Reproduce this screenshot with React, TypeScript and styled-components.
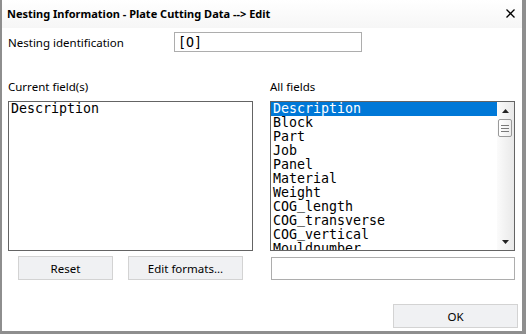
import React from "react";
import styled, { createGlobalStyle } from "styled-components";

const fields = [
  "Description",
  "Block",
  "Part",
  "Job",
  "Panel",
  "Material",
  "Weight",
  "COG_length",
  "COG_transverse",
  "COG_vertical",
  "Mouldnumber",
];

// the mono font puts "_" very low, lift it so it stays with its own row
function fieldLabel(name: string) {
  const parts = name.split("_");
  return parts.map((part, i) => (
    <React.Fragment key={i}>
      {i > 0 && <Underscore>_</Underscore>}
      {part}
    </React.Fragment>
  ));
}

function App() {
  return (
    <>
      <GlobalStyle />
      <Window>
        <TitleBar>
          <Title>Nesting Information - Plate Cutting Data --&gt; Edit</Title>
          <CloseIcon width="9" height="9" viewBox="0 0 9 9">
            <path d="M0.5 0.5 L8.5 8.5 M8.5 0.5 L0.5 8.5" stroke="#000" strokeWidth="1.3" />
          </CloseIcon>
        </TitleBar>
        <Body>
          <IdRow>
            <IdLabel>Nesting identification</IdLabel>
            <TextInput width={188} height={20} defaultValue="[O]" />
          </IdRow>
          <Columns>
            <Column>
              <ColLabel>Current field(s)</ColLabel>
              <ListBox>
                <Items>
                  <Row>Description</Row>
                </Items>
              </ListBox>
              <ButtonRow>
                <Button width={95}>Reset</Button>
                <Button width={115}>Edit formats...</Button>
              </ButtonRow>
            </Column>
            <Column>
              <ColLabel>All fields</ColLabel>
              <ListBox>
                <Items>
                  {fields.map((f, i) => (
                    <Row key={f} selected={i === 0}>
                      {fieldLabel(f)}
                    </Row>
                  ))}
                </Items>
                <ScrollBar>
                  <ArrowBox>
                    <svg width="7" height="4" viewBox="0 0 7 4">
                      <path d="M3.5 0 L7 4 L0 4 Z" fill="#222" />
                    </svg>
                  </ArrowBox>
                  <Thumb>
                    <Grip />
                    <Grip />
                    <Grip />
                  </Thumb>
                  <Track />
                  <ArrowBox>
                    <svg width="7" height="4" viewBox="0 0 7 4">
                      <path d="M0 0 L7 0 L3.5 4 Z" fill="#222" />
                    </svg>
                  </ArrowBox>
                </ScrollBar>
              </ListBox>
              <FilterInput />
            </Column>
          </Columns>
          <Footer>
            <Button width={125}>OK</Button>
          </Footer>
        </Body>
      </Window>
    </>
  );
}

export default App;

const GlobalStyle = createGlobalStyle`
  body {
    margin: 0;
    background: #fff;
  }
  * {
    box-sizing: border-box;
  }
`;

const Window = styled.div`
  width: 526px;
  height: 334px;
  background: #fff;
  border-left: 2px solid #8e8e8e;
  border-right: 4px solid #8e8e8e;
  border-bottom: 3px solid #8e8e8e;
  display: flex;
  flex-direction: column;
  font-family: "Noto Sans", "Open Sans", sans-serif;
  font-size: 11px;
  color: #000;
`;

const TitleBar = styled.div`
  height: 28px;
  display: flex;
  align-items: center;
  justify-content: space-between;
  padding: 0 7px 2px 5px;
  background: linear-gradient(#ffffff, #f6f6f6);
`;

const Title = styled.div`
  font-weight: bold;
  font-size: 11px;
`;

const CloseIcon = styled.svg`
  display: block;
  margin-top: 1px;
`;

const Body = styled.div`
  flex: 1;
  display: flex;
  flex-direction: column;
  padding: 4px 4px 0 6px;
`;

const IdRow = styled.div`
  display: flex;
  align-items: center;
  height: 20px;
`;

const IdLabel = styled.div`
  width: 166px;
  font-size: 11.5px;
`;

const TextInput = styled.input<{ width: number; height: number }>`
  width: ${(p) => p.width}px;
  height: ${(p) => p.height}px;
  border: 1px solid #adadad;
  padding: 0 0 0 3px;
  font-family: "DejaVu Sans Mono", monospace;
  font-size: 13.3px;
  outline: none;
  background: #fff;
  color: #000;
`;

const Columns = styled.div`
  display: grid;
  grid-template-columns: 245px 245px;
  column-gap: 17px;
  margin-top: 27px;
`;

const Column = styled.div`
  display: flex;
  flex-direction: column;
`;

const ColLabel = styled.div`
  height: 15px;
  line-height: 15px;
  font-size: 11.5px;
`;

const ListBox = styled.div`
  margin-top: 7px;
  height: 150px;
  border: 1px solid #646464;
  display: flex;
  background: #fff;
`;

const Items = styled.div`
  flex: 1;
  overflow: hidden;
  font-family: "DejaVu Sans Mono", monospace;
  font-size: 13.3px;
`;

const Row = styled.div<{ selected?: boolean }>`
  height: 14px;
  line-height: 13px;
  padding-left: 2px;
  white-space: nowrap;
  overflow: hidden;
  background: ${(p) => (p.selected ? "#0078d7" : "transparent")};
  color: ${(p) => (p.selected ? "#fff" : "#000")};
`;

const Underscore = styled.span`
  vertical-align: 2px;
  line-height: 0;
`;

const ScrollBar = styled.div`
  width: 17px;
  display: flex;
  flex-direction: column;
  background: linear-gradient(to right, #fbfbfb, #e9e9e9);
`;

const ArrowBox = styled.div`
  height: 17px;
  display: flex;
  align-items: center;
  justify-content: center;
  padding-right: 1px;
`;

const Thumb = styled.div`
  height: 18px;
  width: 14px;
  margin-left: 1px;
  border: 1px solid #9a9a9a;
  border-radius: 2px;
  background: linear-gradient(to right, #ffffff, #eeeeee);
  display: flex;
  flex-direction: column;
  align-items: center;
  justify-content: center;
  gap: 2px;
`;

const Grip = styled.div`
  width: 8px;
  height: 1px;
  background: #7a7a7a;
`;

const Track = styled.div`
  flex: 1;
`;

const FilterInput = styled.input`
  margin-top: 6px;
  margin-left: 1px;
  width: 244px;
  height: 23px;
  border: 1px solid #adadad;
  outline: none;
  background: #fff;
`;

const ButtonRow = styled.div`
  display: flex;
  gap: 15px;
  padding-left: 10px;
  margin-top: 5px;
`;

const Button = styled.button<{ width: number }>`
  width: ${(p) => p.width}px;
  height: 24px;
  background: #f0f1f3;
  border: 1px solid #d3d3d3;
  font-family: "Noto Sans", "Open Sans", sans-serif;
  font-size: 11.5px;
  color: #000;
  padding: 0;
`;

const Footer = styled.div`
  display: flex;
  justify-content: flex-end;
  margin-top: 24px;
`;
